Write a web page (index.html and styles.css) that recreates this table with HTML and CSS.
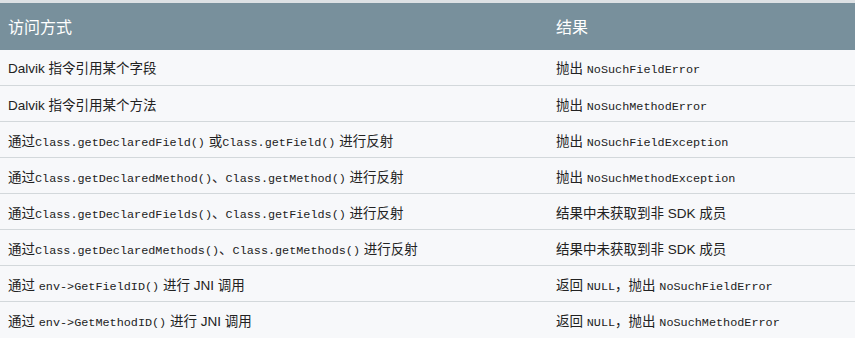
FILE: index.html
```html
<!DOCTYPE html>
<html lang="zh">
<head>
<meta charset="utf-8">
<link rel="stylesheet" href="styles.css">
</head>
<body>
<table class="api-table">
  <colgroup><col class="col-a"><col class="col-b"></colgroup>
  <thead>
    <tr><th>访问方式</th><th>结果</th></tr>
  </thead>
  <tbody>
    <tr><td>Dalvik 指令引用某个字段</td><td>抛出 <code>NoSuchFieldError</code></td></tr>
    <tr><td>Dalvik 指令引用某个方法</td><td>抛出 <code>NoSuchMethodError</code></td></tr>
    <tr><td>通过<code>Class.getDeclaredField()</code> 或<code>Class.getField()</code> 进行反射</td><td>抛出 <code>NoSuchFieldException</code></td></tr>
    <tr><td>通过<code>Class.getDeclaredMethod()</code>、<code>Class.getMethod()</code> 进行反射</td><td>抛出 <code>NoSuchMethodException</code></td></tr>
    <tr><td>通过<code>Class.getDeclaredFields()</code>、<code>Class.getFields()</code> 进行反射</td><td>结果中未获取到非 SDK 成员</td></tr>
    <tr><td>通过<code>Class.getDeclaredMethods()</code>、<code>Class.getMethods()</code> 进行反射</td><td>结果中未获取到非 SDK 成员</td></tr>
    <tr><td>通过 <code>env-&gt;GetFieldID()</code> 进行 JNI 调用</td><td>返回 <code>NULL</code>，抛出 <code>NoSuchFieldError</code></td></tr>
    <tr><td>通过 <code>env-&gt;GetMethodID()</code> 进行 JNI 调用</td><td>返回 <code>NULL</code>，抛出 <code>NoSuchMethodError</code></td></tr>
  </tbody>
</table>
</body>
</html>
```
FILE: styles.css
```css
html, body {
  margin: 0;
  padding: 0;
  background: #ffffff;
}
.api-table {
  width: 855px;
  border-collapse: collapse;
  table-layout: fixed;
  border-top: 3px solid #dde1e4;
  font-family: "Liberation Sans", "Noto Sans CJK SC", sans-serif;
  color: #222222;
}
.col-a { width: 548px; }
.col-b { width: 307px; }
.api-table th {
  background: #78909c;
  color: #ffffff;
  font-weight: normal;
  font-size: 16px;
  text-align: left;
  height: 48px;
  padding: 0 8px;
  box-sizing: border-box;
}
.api-table td {
  background: #f7f8fa;
  font-size: 13.5px;
  height: 36px;
  padding: 0 8px;
  box-sizing: border-box;
  border-bottom: 1px solid #d3d8db;
  white-space: nowrap;
}
.api-table tbody tr:last-child td {
  border-bottom: none;
}
.api-table code {
  font-family: "Liberation Mono", "Noto Sans CJK SC", monospace;
  font-size: 11.8px;
  color: #222222;
}
```
